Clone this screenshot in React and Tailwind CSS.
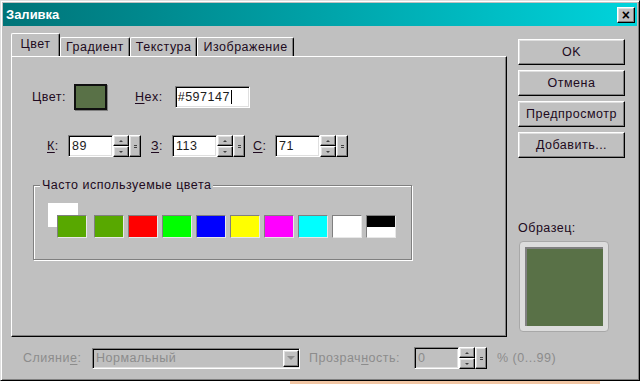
import React from "react";

const raised =
  "border border-t-white border-l-white border-b-black border-r-black shadow-[inset_-1px_-1px_0_#808080,inset_1px_1px_0_#dfdfdf]";
const sunken =
  "border border-t-[#808080] border-l-[#808080] border-b-white border-r-white shadow-[inset_1px_1px_0_#000,inset_-1px_-1px_0_#dfdfdf]";

const U = ({ children }) => <span className="underline underline-offset-2">{children}</span>;

const Spin = ({ value, disabled }) => (
  <div className="flex h-[22px]">
    <div
      className={`${sunken} w-[45px] h-full flex items-center pl-[3px] ${
        disabled ? "bg-[#c0c0c0] text-[#8c8c8c]" : "bg-white text-[#1c1c1c]"
      }`}
    >
      {value}
    </div>
    <div className="flex flex-col w-[16px] h-full">
      <div className={`${raised} flex-1 flex items-center justify-center`}>
        <span className="block w-0 h-0 border-x-[2px] border-x-transparent border-b-[2px] border-b-[#404040]" />
      </div>
      <div className={`${raised} flex-1 flex items-center justify-center`}>
        <span className="block w-0 h-0 border-x-[2px] border-x-transparent border-t-[2px] border-t-[#404040]" />
      </div>
    </div>
    <div className={`${raised} w-[12px] h-full flex flex-col items-center justify-center gap-[1px]`}>
      <span className="block w-[3px] h-[1px] bg-[#404040]" />
      <span className="block w-[3px] h-[1px] bg-[#404040]" />
    </div>
  </div>
);

const Btn = ({ children }) => (
  <div className={`${raised} h-[26px] w-[107px] flex items-center justify-center text-[#200a20]`}>
    {children}
  </div>
);

const colors = ["#ff0000", "#00ff00", "#0000ff", "#ffff00", "#ff00ff", "#00ffff", "#ffffff"];

export default function App() {
  return (
    <div className="w-[640px] h-[384px] overflow-hidden bg-white font-['Liberation_Sans',Arial,sans-serif] text-[12.5px] tracking-[0.5px] leading-none">
      <div className="h-[381px] flex flex-col bg-[#c0c0c0] p-[2px] border border-t-[#dfdfdf] border-l-[#dfdfdf] border-b-black border-r-black shadow-[inset_1px_1px_0_#fff,inset_-1px_-1px_0_#808080]">
        {/* title bar */}
        <div className="h-[23px] flex items-center justify-between bg-gradient-to-r from-[#007478] to-[#00d4dc] pl-[3px] pr-[2px]">
          <span className="text-white font-bold text-[13px] tracking-normal">Заливка</span>
          <div className={`${raised} w-[18px] h-[16px] flex items-center justify-center bg-[#c0c0c0] text-black font-bold text-[14px]`}>
            ×
          </div>
        </div>

        <div className="flex-1 flex flex-col px-[8px]">
          <div className="flex mt-[8px]">
            {/* left: tabs + panel */}
            <div className="w-[496px] flex flex-col">
              <div className="flex items-end h-[22px]">
                <div className="relative z-10 h-[23px] w-[49px] bg-[#c0c0c0] border-t border-l border-t-white border-l-white border-r border-r-black shadow-[inset_-1px_0_0_#808080] rounded-t-[2px] flex items-center justify-center pb-[1px] text-[#200a20]">
                  Цвет
                </div>
                {["Градиент", "Текстура", "Изображение"].map((t) => (
                  <div
                    key={t}
                    className="h-[19px] px-[5px] border-t border-l border-t-white border-l-white border-r border-r-black shadow-[inset_-1px_0_0_#808080] rounded-t-[2px] flex items-center text-[#200a20]"
                  >
                    {t}
                  </div>
                ))}
              </div>
              <div className="h-[281px] border border-t-white border-l-white border-b-black border-r-black shadow-[inset_-1px_-1px_0_#808080] flex flex-col">
                <div className="flex items-center mt-[27px] ml-[20px]">
                  <span className="text-[#200a20]">Цвет:</span>
                  <div className="ml-[8px] w-[33px] h-[26px] bg-[#597147] border-2 border-[#101010] shadow-[1px_1px_0_#808080]" />
                  <span className="ml-[28px] text-[#200a20]">
                    <U>Н</U>ex:
                  </span>
                  <div className={`${sunken} ml-[12px] w-[75px] h-[22px] bg-white flex items-center pl-[2px] text-[#1c1c1c]`}>
                    #597147<span className="w-[1px] h-[14px] bg-black ml-[1px]" />
                  </div>
                </div>

                <div className="flex items-center mt-[25px] ml-[35px]">
                  <span className="text-[#200a20] w-[21px]">
                    <U>К</U>:
                  </span>
                  <Spin value="89" />
                  <span className="ml-[10px] w-[21px] text-[#200a20]">
                    <U>З</U>:
                  </span>
                  <Spin value="113" />
                  <span className="ml-[8px] w-[22px] text-[#200a20]">
                    <U>С</U>:
                  </span>
                  <Spin value="71" />
                </div>

                <div className="relative mt-[28px] ml-[21px] w-[379px] h-[75px] border border-[#808080] shadow-[1px_1px_0_#fff,inset_1px_1px_0_#fff]">
                  <span className="absolute -top-[7px] left-[6px] bg-[#c0c0c0] px-[2px] text-[#200a20]">
                    Часто используемые цвета
                  </span>
                  <div className="absolute left-[14px] top-[17px] w-[30px] h-[24px] bg-white" />
                  <div className="flex gap-[4px] mt-[29px] ml-[23px]">
                    <div className="relative w-[30px] h-[23px] bg-[#58a800] border border-t-[#808080] border-l-[#808080] border-b-[#e8e8e8] border-r-[#e8e8e8]" />
                    <div className="ml-[3px] w-[30px] h-[23px] bg-[#58a800] border border-t-[#808080] border-l-[#808080] border-b-[#e8e8e8] border-r-[#e8e8e8]" />
                    {colors.map((c, i) => (
                      <div
                        key={i}
                        className="w-[30px] h-[23px] border border-t-[#808080] border-l-[#808080] border-b-[#e8e8e8] border-r-[#e8e8e8]"
                        style={{ background: c }}
                      />
                    ))}
                    <div className="w-[30px] h-[23px] flex flex-col border border-t-[#808080] border-l-[#808080] border-b-[#e8e8e8] border-r-[#e8e8e8]">
                      <div className="flex-1 bg-black" />
                      <div className="flex-1 bg-white" />
                    </div>
                  </div>
                </div>
              </div>
            </div>

            {/* right column */}
            <div className="ml-[11px] flex flex-col">
              <div className="mt-[5px] flex flex-col gap-[5px]">
                <Btn>OK</Btn>
                <Btn>Отмена</Btn>
                <Btn>Предпросмотр</Btn>
                <Btn>
                  <span>
                    <U>Д</U>обавить...
                  </span>
                </Btn>
              </div>
              <span className="mt-[64px] text-[#200a20]">Образец:</span>
              <div className="mt-[6px] ml-[1px] w-[90px] h-[91px] rounded-[4px] bg-[#dcdcdc] border border-[#a8a8a8] p-[5px]">
                <div className="w-full h-full bg-[#597147] border-t-2 border-l-2 border-t-[#808080] border-l-[#808080]" />
              </div>
            </div>
          </div>

          {/* bottom row */}
          <div className="flex items-center mt-[10px] text-[#8c8c8c]">
            <span className="ml-[12px] w-[69px]">
              Слияни<U>е</U>:
            </span>
            <div className={`${sunken} w-[208px] h-[21px] flex items-center justify-between bg-[#c0c0c0]`}>
              <span className="pl-[3px]">Нормальный</span>
              <div className={`${raised} w-[16px] h-[17px] flex items-center justify-center`}>
                <span className="block w-0 h-0 border-x-[4px] border-x-transparent border-t-[4px] border-t-[#8c8c8c]" />
              </div>
            </div>
            <span className="ml-[9px] w-[105px]">
              Прозрач<U>н</U>ость:
            </span>
            <Spin value="0" disabled />
            <span className="ml-[10px]">% (0...99)</span>
          </div>
        </div>
      </div>
      <div className="flex h-[3px]">
        <div className="w-[290px] bg-white" />
        <div className="w-[310px] bg-[#f2c7a5]" />
      </div>
    </div>
  );
}
